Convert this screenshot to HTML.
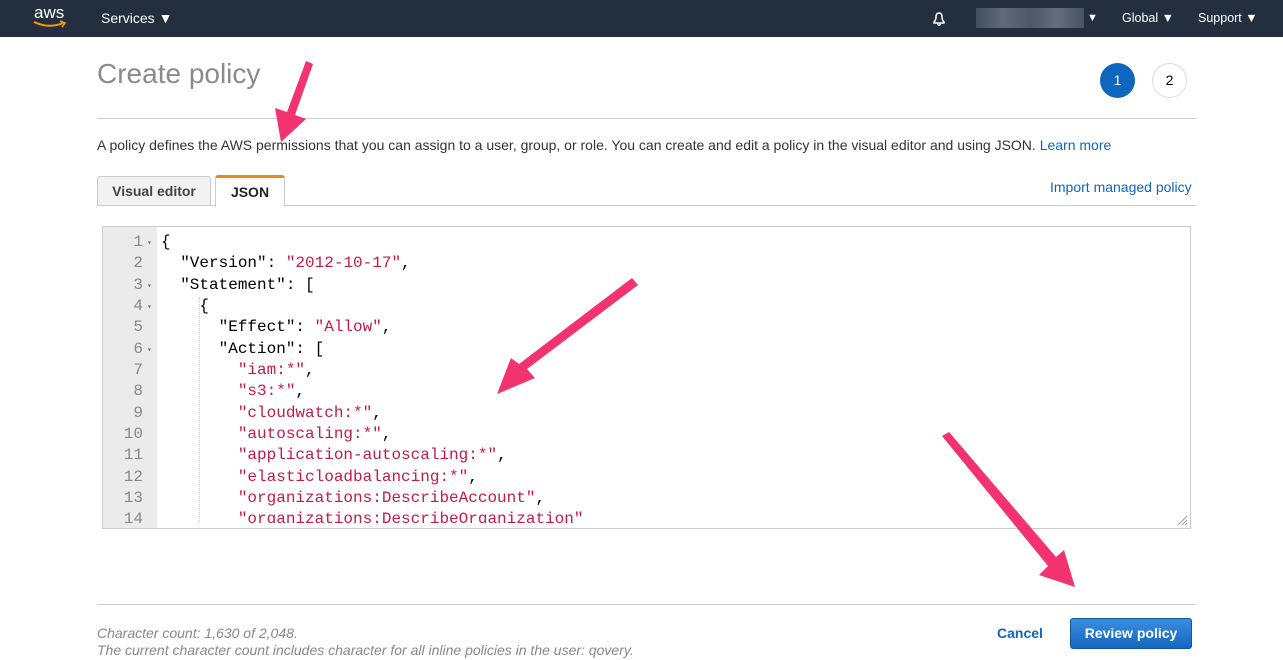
<!DOCTYPE html>
<html><head><meta charset="utf-8"><style>
*{margin:0;padding:0;box-sizing:border-box}
body{width:1283px;height:660px;overflow:hidden;background:#fff;font-family:"Liberation Sans",Arial,sans-serif;position:relative;color:#16191f}
.nav{position:absolute;left:0;top:0;width:1283px;height:37px;background:#232f3e;color:#fff;font-size:14px}
.nav span{position:absolute;top:10px}
.abs{position:absolute}
.code{position:absolute;left:102px;top:226px;width:1089px;height:303px;border:1px solid #ccc;overflow:hidden;font-family:"Liberation Mono","DejaVu Sans Mono",monospace;font-size:16px}
.clip{position:absolute;left:0;top:0;width:100%;height:296px;overflow:hidden}
.gut{position:absolute;left:0;top:0;width:54px;height:100%;background:#ebebeb}
.ln{position:absolute;width:40px;text-align:right;color:#888}
.fd{position:absolute;left:44px;font-size:8px;color:#777}
.tx{position:absolute;left:58px;white-space:pre;color:#000}
.s{color:#c41a4a}
</style></head><body>
<div class="nav">
 <span style="left:34px;top:3px;font-size:17px;">aws</span>
 <svg class="abs" style="left:32px;top:20px" width="36" height="10"><path d="M2 2 Q17 9 31 3" stroke="#f90" stroke-width="2" fill="none"/><path d="M28 1 L33 3 L30 7" stroke="#f90" stroke-width="1.6" fill="none"/></svg>
 <span style="left:101px">Services ▼</span>
 <svg class="abs" style="left:930px;top:10px" width="18" height="18"><path d="M4 13 L4 12 Q6 10 6 7 Q6 3 9 3 Q12 3 12 7 Q12 10 14 12 L14 13 Z M7.5 14 Q9 16.5 10.5 14" stroke="#fff" stroke-width="1.5" fill="none"/></svg>
 <div class="abs" style="left:976px;top:8px;width:108px;height:20px;background:linear-gradient(90deg,#4a5563,#6b7580,#555f6b,#707a85,#4f5966);opacity:.85"></div>
 <span style="left:1087px;font-size:11px;top:12px">▼</span>
 <span style="left:1122px;font-size:12.5px;top:11px">Global ▼</span>
 <span style="left:1198px;font-size:12.5px;top:11px">Support ▼</span>
</div>
<div class="abs" style="left:97px;top:58px;font-size:28px;color:#8b8b8b">Create policy</div>
<div class="abs" style="left:1100px;top:63px;width:35px;height:35px;border-radius:50%;background:#0f66c0;color:#fff;font-size:14px;text-align:center;line-height:35px">1</div>
<div class="abs" style="left:1152px;top:63px;width:35px;height:35px;border-radius:50%;border:1px solid #ddd;color:#000;font-size:14px;text-align:center;line-height:33px">2</div>
<div class="abs" style="left:97px;top:118px;width:1099px;height:1px;background:#ccc"></div>
<div class="abs" style="left:97px;top:137px;font-size:14px;color:#333;white-space:nowrap">A policy defines the AWS permissions that you can assign to a user, group, or role. You can create and edit a policy in the visual editor and using JSON. <span style="color:#0f66c0">Learn more</span></div>
<div class="abs" style="left:97px;top:176px;width:114px;height:30px;background:#f2f2f2;border:1px solid #ccc;border-bottom:none;border-radius:3px 3px 0 0;font-size:14px;font-weight:bold;color:#444;text-align:center;line-height:29px">Visual editor</div>
<div class="abs" style="left:215px;top:175px;width:70px;height:32px;background:#fff;border:1px solid #ccc;border-top:3px solid #e88a1a;border-bottom:none;border-radius:3px 3px 0 0;font-size:14px;font-weight:bold;color:#222;text-align:center;line-height:28px;z-index:2">JSON</div>
<div class="abs" style="left:97px;top:205px;width:1099px;height:1px;background:#ccc"></div>
<div class="abs" style="left:1050px;top:179px;font-size:14px;color:#0f66c0">Import managed policy</div>
<div class="code">
 <div class="gut"></div>
 <div class="clip">
 <div class="abs" style="left:96px;top:70px;height:240px;border-left:1px dotted #ccc"></div>
 <div id="lines"></div>
 </div>
 <svg class="abs" style="left:1073px;top:287px" width="12" height="12"><path d="M11 2L2 11M11 6L6 11M11 9L9 11" stroke="#999" stroke-width="1"/></svg>
</div>
<script>
var L=[['{',''],['  "Version": ','"2012-10-17"',','],['  "Statement": [',''],['    {',''],['      "Effect": ','"Allow"',','],['      "Action": [',''],['        ','"iam:*"',','],['        ','"s3:*"',','],['        ','"cloudwatch:*"',','],['        ','"autoscaling:*"',','],['        ','"application-autoscaling:*"',','],['        ','"elasticloadbalancing:*"',','],['        ','"organizations:DescribeAccount"',','],['        ','"organizations:DescribeOrganization"','']];
var f=[1,3,4,6],h='';
for(var i=0;i<L.length;i++){var y=6+i*21.33;
h+='<div class="ln" style="top:'+y+'px">'+(i+1)+'</div>';
if(f.indexOf(i+1)>=0)h+='<div class="fd" style="top:'+(y+5)+'px">▾</div>';
h+='<div class="tx" style="top:'+y+'px">'+L[i][0]+'<span class="s">'+(L[i][1]||'')+'</span>'+(L[i][2]||'')+'</div>';}
document.getElementById('lines').innerHTML=h;
</script>
<div class="abs" style="left:97px;top:604px;width:1099px;height:1px;background:#ccc"></div>
<div class="abs" style="left:97px;top:625px;font-size:14px;font-style:italic;color:#888;line-height:17px;white-space:nowrap">Character count: 1,630 of 2,048.<br>The current character count includes character for all inline policies in the user: qovery.</div>
<div class="abs" style="left:997px;top:625px;font-size:14px;font-weight:bold;color:#0f66c0">Cancel</div>
<div class="abs" style="left:1070px;top:618px;width:122px;height:31px;border-radius:3px;background:linear-gradient(#3a8ee0,#1666c0);border:1px solid #11589f;color:#fff;font-size:14px;font-weight:bold;text-align:center;line-height:29px">Review policy</div>
<svg class="abs" style="left:0;top:0" width="1283" height="660">
<g fill="#f2336f">
<path d="M306 61 L313 64 L295 115 L306 119 L281 142 L275 108 L287 112 Z"/>
<path d="M632 278 L638 285 L527 369 L535 378 L497 394 L511 358 L519 364 Z"/>
<path d="M942 436 L949 432 L1056 557 L1064 550 L1075 587 L1039 575 L1048 566 Z"/>
</g></svg>
</body></html>
